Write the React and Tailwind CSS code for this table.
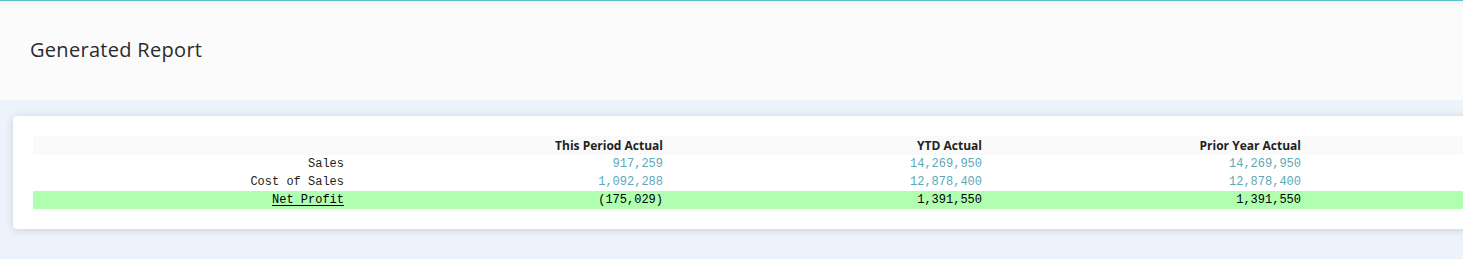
export default function App() {
  const rows = [
    { label: "Sales", values: ["917,259", "14,269,950", "14,269,950"] },
    { label: "Cost of Sales", values: ["1,092,288", "12,878,400", "12,878,400"] },
  ];
  const total = { label: "Net Profit", values: ["(175,029)", "1,391,550", "1,391,550"] };
  const cols = ["This Period Actual", "YTD Actual", "Prior Year Actual"];

  return (
    <div className="w-[1463px] h-[259px] overflow-hidden bg-[#edf3fa] border-t border-[#5fbfc5]">
      <header className="h-[99px] bg-[#fbfbfb] shadow-[inset_0_6px_8px_-6px_rgba(0,0,0,0.08)] flex items-center pl-[30px]">
        <h1 className="text-[20px] text-[#2b2b2b] font-['Open_Sans',sans-serif] tracking-[0.3px] pb-[2px]">
          Generated Report
        </h1>
      </header>
      <div className="pt-4 pl-[13px]">
        <div className="w-[1500px] h-[113px] bg-white rounded-[4px] shadow-[0_1px_8px_rgba(0,0,0,0.14)] pt-5 pl-5">
          <table className="border-collapse w-[1480px] text-[12px] font-['Liberation_Mono',monospace]">
            <thead>
              <tr className="bg-[#fafafa] h-[19px]">
                <th className="w-[319px]"></th>
                {cols.map((c) => (
                  <th
                    key={c}
                    className="w-[319px] text-right pr-2 pt-[1px] font-['Open_Sans',sans-serif] font-bold text-[12px] text-[#222] leading-[18px]"
                  >
                    {c}
                  </th>
                ))}
                <th></th>
              </tr>
            </thead>
            <tbody>
              {rows.map((r) => (
                <tr key={r.label} className="h-[18px]">
                  <td className="text-right pr-2 text-[#222] leading-[18px]">{r.label}</td>
                  {r.values.map((v, i) => (
                    <td key={i} className="text-right pr-2 text-[#5aa8b8] leading-[18px]">
                      {v}
                    </td>
                  ))}
                  <td></td>
                </tr>
              ))}
              <tr className="h-[18px] bg-[#b0ffb0]">
                <td className="text-right pr-2 text-black leading-[18px]">
                  <span className="underline underline-offset-2">{total.label}</span>
                </td>
                {total.values.map((v, i) => (
                  <td key={i} className="text-right pr-2 text-black leading-[18px]">
                    {v}
                  </td>
                ))}
                <td></td>
              </tr>
            </tbody>
          </table>
        </div>
      </div>
    </div>
  );
}
